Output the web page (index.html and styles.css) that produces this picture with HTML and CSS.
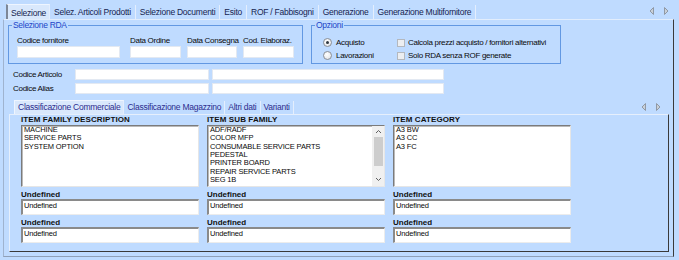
FILE: index.html
```html
<!DOCTYPE html>
<html lang="it">
  <head>
    <meta charset="utf-8" />
    <title>Selezione RDA</title>
    <link rel="stylesheet" href="styles.css">
  </head>
  <body>
    <div class="tabstrip">
      <span class="tab active">Selezione</span>
      <span class="tab">Selez. Articoli Prodotti</span>
      <span class="tab">Selezione Documenti</span>
      <span class="tab">Esito</span>
      <span class="tab">ROF / Fabbisogni</span>
      <span class="tab">Generazione</span>
      <span class="tab">Generazione Multifornitore</span>
      <svg class="tab-arrows" width="20" height="8" viewBox="0 0 20 8">
        <polygon points="4.5,0.5 1,4 4.5,7.5" />
        <polygon points="15.5,0.5 19,4 15.5,7.5" />
      </svg>
    </div>

    <div class="tabpage">
      <div class="group-row">
        <fieldset class="group group-rda">
          <legend>Selezione RDA</legend>
          <div class="fields">
            <div class="field f-forn"><label>Codice fornitore</label><div class="edit"></div></div>
            <div class="field f-ord"><label>Data Ordine</label><div class="edit"></div></div>
            <div class="field f-cons"><label>Data Consegna</label><div class="edit"></div></div>
            <div class="field f-elab"><label>Cod. Elaboraz.</label><div class="edit"></div></div>
          </div>
        </fieldset>
        <fieldset class="group group-opz">
          <legend>Opzioni</legend>
          <div class="options">
            <div class="opt"><span class="radio checked"></span>Acquisto</div>
            <div class="opt"><span class="check"></span>Calcola prezzi acquisto / fornitori alternativi</div>
            <div class="opt"><span class="radio"></span>Lavorazioni</div>
            <div class="opt"><span class="check"></span>Solo RDA senza ROF generate</div>
          </div>
        </fieldset>
      </div>

      <div class="code-row">
        <span class="code-label">Codice Articolo</span>
        <div class="edit code"></div>
        <div class="edit desc"></div>
      </div>
      <div class="code-row">
        <span class="code-label">Codice Alias</span>
        <div class="edit code"></div>
        <div class="edit desc"></div>
      </div>

      <div class="tabstrip inner">
        <span class="tab active">Classificazione Commerciale</span>
        <span class="tab">Classificazione Magazzino</span>
        <span class="tab">Altri dati</span>
        <span class="tab">Varianti</span>
        <svg class="tab-arrows" width="20" height="8" viewBox="0 0 20 8">
          <polygon points="4.5,0.5 1,4 4.5,7.5" />
          <polygon points="15.5,0.5 19,4 15.5,7.5" />
        </svg>
      </div>

      <div class="inner-page">
        <div class="col">
          <div class="col-title">ITEM FAMILY DESCRIPTION</div>
          <div class="listbox">
            <div class="items">
              <div>MACHINE</div>
              <div>SERVICE PARTS</div>
              <div>SYSTEM OPTION</div>
            </div>
          </div>
          <div class="col-title sub">Undefined</div>
          <div class="text-edit">Undefined</div>
          <div class="col-title sub">Undefined</div>
          <div class="text-edit">Undefined</div>
        </div>

        <div class="col">
          <div class="col-title">ITEM SUB FAMILY</div>
          <div class="listbox">
            <div class="items">
              <div>ADF/RADF</div>
              <div>COLOR MFP</div>
              <div>CONSUMABLE SERVICE PARTS</div>
              <div>PEDESTAL</div>
              <div>PRINTER BOARD</div>
              <div>REPAIR SERVICE PARTS</div>
              <div>SEG 1B</div>
            </div>
            <div class="vscroll">
              <svg width="7" height="5" viewBox="0 0 7 5"><polyline points="1,4 3.5,1.5 6,4" /></svg>
              <div class="thumb"></div>
              <svg width="7" height="5" viewBox="0 0 7 5"><polyline points="1,1 3.5,3.5 6,1" /></svg>
            </div>
          </div>
          <div class="col-title sub">Undefined</div>
          <div class="text-edit">Undefined</div>
          <div class="col-title sub">Undefined</div>
          <div class="text-edit">Undefined</div>
        </div>

        <div class="col">
          <div class="col-title">ITEM CATEGORY</div>
          <div class="listbox">
            <div class="items">
              <div>A3 BW</div>
              <div>A3 CC</div>
              <div>A3 FC</div>
            </div>
          </div>
          <div class="col-title sub">Undefined</div>
          <div class="text-edit">Undefined</div>
          <div class="col-title sub">Undefined</div>
          <div class="text-edit">Undefined</div>
        </div>
      </div>
    </div>
  </body>
</html>
```

FILE: styles.css
```css
:root {
  --bg: #bfdbff;
  --tab-active: #d9e8fc;
  --tab-text: #16244f;
  --group-line: #6298e2;
  --legend: #1c46c8;
  --dark-edge: #3a3a3a;
}
* {
  box-sizing: border-box;
}
body {
  margin: 0;
  width: 679px;
  height: 260px;
  overflow: hidden;
  background: var(--bg);
  color: #0a0a0a;
  font-family: "Liberation Sans", Arial, sans-serif;
  font-size: 8px;
  letter-spacing: -0.3px;
}

/* tab strips */
.tabstrip {
  display: flex;
  align-items: flex-end;
  height: 19px;
  padding-left: 6px;
}
.tab {
  height: 14px;
  line-height: 14px;
  padding: 0 4px;
  font-size: 8.5px;
  letter-spacing: -0.25px;
  color: var(--tab-text);
  white-space: nowrap;
  border-right: 1px solid #e4eefd;
}
.tab.active {
  height: 15px;
  padding: 1px 3px 0;
  background: var(--tab-active);
  border-left: 2px solid #7d8797;
  border-top: 1px solid #eef5ff;
}
.tab-arrows {
  align-self: center;
  margin: 2px 10px 0 auto;
  fill: #c9d0d8;
  stroke: #9099a5;
  stroke-width: 1;
}
.tabstrip.inner {
  height: 14px;
  margin-top: 6px;
  padding-left: 10px;
}
.tabstrip.inner .tab {
  height: 13px;
  line-height: 13px;
  padding: 0 3px;
  color: #2c2c8e;
}
.tabstrip.inner .tab.active {
  height: 14px;
  border-left: 1px solid #eef5ff;
}
.tabstrip.inner .tab-arrows {
  margin: 0 12px 0 auto;
}

/* main page */
.tabpage {
  width: 671px;
  height: 238px;
  margin-left: 3px;
  border-top: 1px solid #e2edfc;
  border-left: 1px solid #9fb3cf;
  border-right: 1px solid var(--dark-edge);
  border-bottom: 1px solid #8fa0b8;
}

.group-row {
  display: flex;
  gap: 8px;
  padding-left: 4px;
}
.group {
  margin: 0;
  padding: 0;
  height: 44px;
  min-width: 0;
  border: 1px solid var(--group-line);
}
.group legend {
  margin-left: 3px;
  padding: 0 1px;
  line-height: 10px;
  font-size: 8.5px;
  color: var(--legend);
}
.group-rda {
  width: 295px;
}
.group-opz {
  width: 250px;
}

.fields {
  display: flex;
  gap: 6px;
  padding: 6px 0 0 8px;
}
.field label {
  display: block;
  line-height: 10px;
  white-space: nowrap;
}
.field .edit {
  height: 12px;
}
.f-forn {
  width: 103px;
  margin-right: 4px;
}
.f-ord {
  width: 51px;
}
.f-cons {
  width: 50px;
}
.f-elab {
  width: 51px;
}
.edit {
  background: #fff;
  border: 1px solid #e3e9f2;
}

.options {
  display: grid;
  grid-template-columns: 74px 1fr;
  grid-auto-rows: 13px;
  padding: 6px 0 0 11px;
}
.opt {
  display: flex;
  align-items: center;
  white-space: nowrap;
}
.radio {
  width: 9px;
  height: 9px;
  margin-right: 4px;
  border-radius: 50%;
  border: 1px solid #8b8f96;
  background: radial-gradient(circle at 40% 35%, #ffffff, #dcdfe4);
  display: flex;
  align-items: center;
  justify-content: center;
}
.radio.checked::after {
  content: "";
  width: 3px;
  height: 3px;
  border-radius: 50%;
  background: #2e3640;
}
.check {
  width: 8px;
  height: 8px;
  margin-right: 3px;
  border: 1px solid #b4b8be;
  background: #eceef1;
}

.code-row {
  display: flex;
  gap: 3px;
  height: 11px;
  line-height: 11px;
  margin-top: 3px;
  padding-left: 9px;
}
.group-row + .code-row {
  margin-top: 5px;
}
.code-label {
  width: 59px;
  white-space: nowrap;
}
.edit.code {
  width: 134px;
}
.edit.desc {
  width: 232px;
}

/* inner page */
.inner-page {
  display: flex;
  gap: 8px;
  width: 660px;
  height: 138px;
  margin-left: 5px;
  padding: 0 0 0 11px;
  border-top: 1px solid #e6effc;
  border-left: 1px solid #e6effc;
  border-right: 1px solid var(--dark-edge);
  border-bottom: 1px solid var(--dark-edge);
}
.col {
  width: 178px;
}
.col-title {
  font-weight: bold;
  line-height: 10px;
  letter-spacing: 0.1px;
  color: #111;
}
.col-title.sub {
  margin-top: 3px;
  line-height: 9px;
  letter-spacing: 0;
}
.listbox {
  display: flex;
  height: 62px;
  background: #fff;
  border-style: solid;
  border-width: 1px;
  border-color: #7b7b7b #e6e6e6 #e6e6e6 #7b7b7b;
  box-shadow: inset 1px 1px 0 #b9b9b9;
  overflow: hidden;
}
.items {
  flex: 1;
  padding-left: 2px;
  font-size: 7.5px;
  line-height: 8.33px;
  letter-spacing: -0.15px;
}
.vscroll {
  width: 12px;
  background: #f0f0f0;
  display: flex;
  flex-direction: column;
  align-items: center;
  padding-top: 3px;
}
.vscroll svg {
  fill: none;
  stroke: #606060;
  stroke-width: 1;
}
.vscroll .thumb {
  width: 9px;
  height: 29px;
  margin: 3px 0 11px;
  background: #cdcdcd;
}
.text-edit {
  height: 16px;
  padding: 0 1px;
  background: #fff;
  border-style: solid;
  border-width: 2px 1px 1px 2px;
  border-color: #8a8a8a #ececec #ececec #8a8a8a;
  font-size: 7.5px;
  line-height: 10px;
  letter-spacing: -0.15px;
}
```
